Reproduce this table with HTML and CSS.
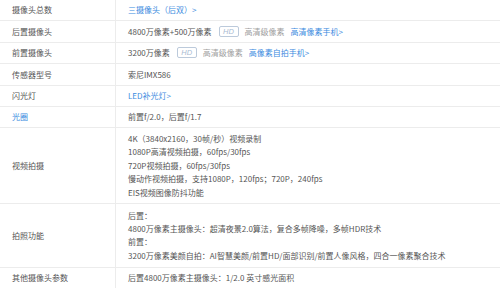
FILE: index.html
```html
<!DOCTYPE html>
<html lang="zh-CN">
<head>
<meta charset="utf-8">
<link rel="stylesheet" href="styles.css">
</head>
<body>
<div class="table">
  <div class="row"><div class="label">摄像头总数</div><div class="value"><span class="link">三摄像头（后双）&gt;</span></div></div>
  <div class="row"><div class="label">后置摄像头</div><div class="value inline"><span>4800万像素+500万像素</span><span class="hd">HD</span><span class="muted">高清级像素</span><span class="link">高清像素手机&gt;</span></div></div>
  <div class="row"><div class="label">前置摄像头</div><div class="value inline"><span>3200万像素</span><span class="hd">HD</span><span class="muted">高清级像素</span><span class="link">高像素自拍手机&gt;</span></div></div>
  <div class="row"><div class="label">传感器型号</div><div class="value">索尼IMX586</div></div>
  <div class="row"><div class="label">闪光灯</div><div class="value"><span class="link">LED补光灯&gt;</span></div></div>
  <div class="row"><div class="label link">光圈</div><div class="value">前置f/2.0，后置f/1.7</div></div>
  <div class="row"><div class="label">视频拍摄</div><div class="value">
    <div>4K（3840x2160，30帧/秒）视频录制</div>
    <div>1080P高清视频拍摄，60fps/30fps</div>
    <div>720P视频拍摄，60fps/30fps</div>
    <div>慢动作视频拍摄，支持1080P，120fps；720P，240fps</div>
    <div>EIS视频图像防抖功能</div>
  </div></div>
  <div class="row"><div class="label">拍照功能</div><div class="value photo">
    <div>后置：</div>
    <div>4800万像素主摄像头：超清夜景2.0算法，复合多帧降噪，多帧HDR技术</div>
    <div>前置：</div>
    <div>3200万像素美颜自拍：AI智慧美颜/前置HD/面部识别/前置人像风格，四合一像素聚合技术</div>
  </div></div>
  <div class="row"><div class="label">其他摄像头参数</div><div class="value">后置4800万像素主摄像头：1/2.0 英寸感光面积</div></div>
</div>
</body>
</html>
```

FILE: styles.css
```css
html, body {
  margin: 0;
  padding: 0;
  background: #ffffff;
}
body {
  font-family: "Noto Sans CJK SC", "Noto Sans", sans-serif;
  font-size: 8px;
  color: #555555;
  width: 500px;
  height: 288px;
  overflow: hidden;
}
.table {
  margin-top: 0;
}
.row {
  display: grid;
  grid-template-columns: 116px 1fr;
  border-bottom: 1px solid #ececec;
}
.label {
  border-right: 1px solid #ececec;
  padding: 3.4px 0 3.4px 12px;
  line-height: 13.6px;
  display: flex;
  align-items: center;
}
.value {
  padding: 3.4px 0 3.4px 12px;
  line-height: 13.6px;
}
.photo {
  padding-top: 4.6px;
  padding-bottom: 4.6px;
}
.photo div {
  line-height: 13.4px;
}
.inline {
  display: flex;
  align-items: center;
}
.link {
  color: #3b8be0;
}
.muted {
  color: #a0a0a0;
  margin-right: 6px;
}
.hd {
  display: inline-flex;
  align-items: center;
  justify-content: center;
  width: 18px;
  height: 9px;
  border: 1px solid #bccadb;
  border-radius: 2px;
  color: #a9bbd2;
  font-family: "Liberation Sans", sans-serif;
  font-style: italic;
  font-size: 7.5px;
  line-height: 9px;
  margin: 0 6px 0 7px;
}
```
